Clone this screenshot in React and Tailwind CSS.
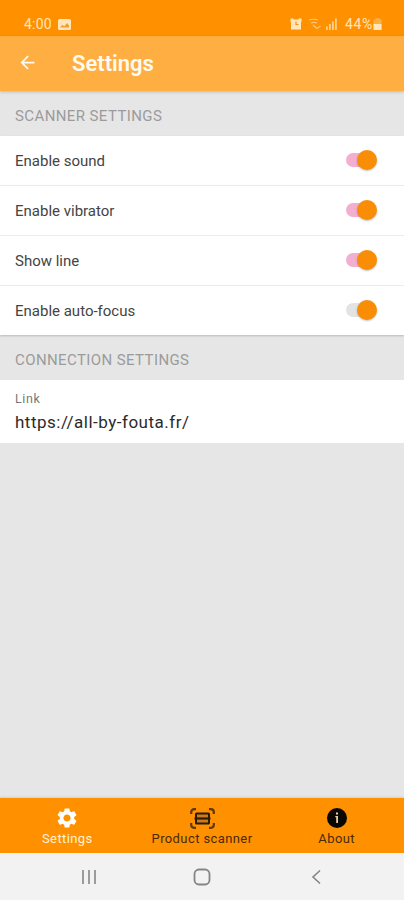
import React, { useState } from 'react';
import { MdArrowBack, MdSettings } from 'react-icons/md';

const initialOptions = [
    { id: 'sound', label: 'Enable sound', checked: true },
    { id: 'vibrator', label: 'Enable vibrator', checked: true },
    { id: 'line', label: 'Show line', checked: true },
    { id: 'focus', label: 'Enable auto-focus', checked: false },
];

const StatusBar = () => (
    <div className="h-9 shrink-0 bg-[#ff9100] flex items-center justify-between pl-6 pr-[22px] pt-3 text-[#ffe6bd]">
        <div className="flex items-center gap-[6px]">
            <span className="text-[14px] leading-none tracking-[0.2px]">4:00</span>
            <svg width="13" height="11" viewBox="0 0 13 11">
                <rect width="13" height="11" rx="1.5" fill="currentColor" />
                <path d="M2 8.5 4.5 5.8 6.2 7.2 9.2 4 11 6.5v2z" fill="#ff9c1f" />
            </svg>
        </div>
        <div className="flex items-center">
            {/* Alarm */}
            <svg width="12" height="12" viewBox="0 0 12 12">
                <path d="M.5.5h3v1h5v-1h3v3l-.5 1v7H1v-7l-.5-1z" fill="currentColor" />
                <path d="M6 3.500v3h2.500" stroke="#ff9100" strokeWidth="1.2" fill="none" />
            </svg>
            {/* Wifi */}
            <svg className="ml-[6px]" width="14" height="12" viewBox="0 0 14 12" fill="none" stroke="currentColor" strokeWidth="1.2" opacity="0.65">
                <path d="M1 2c3-1 6-1 9 0M3 5c2-.7 4-.7 6 0" />
                <path d="M5 7 9 10.500 12.500 8" />
            </svg>
            {/* Signal */}
            <svg className="ml-[4px]" width="11" height="12" viewBox="0 0 11 12" fill="currentColor" opacity="0.75">
                <rect x="0" y="8.5" width="1.8" height="3.5" />
                <rect x="3" y="6" width="1.8" height="6" />
                <rect x="6" y="3.3" width="1.8" height="8.7" />
                <rect x="9" y="0.5" width="1.8" height="11.5" />
            </svg>
            <span className="ml-[8px] text-[14px] leading-none tracking-[0.7px]">44%</span>
            {/* Battery */}
            <svg width="9" height="12" viewBox="0 0 9 12">
                <path d="M2.5 0h4v1.5h2V12h-8V1.5h2z" fill="currentColor" opacity="0.35" />
                <path d="M.5 6h8v6h-8z" fill="currentColor" />
            </svg>
        </div>
    </div>
);

const Toggle = ({ checked, onChange, label }) => (
    <button
        type="button"
        role="switch"
        aria-checked={checked}
        aria-label={label}
        onClick={onChange}
        className="relative -top-px w-[31px] h-5 flex items-center"
    >
        <span className={`w-7 h-[14px] rounded-full ${checked ? 'bg-[#f4afd0]' : 'bg-[#e3e3e3]'}`} />
        <span className="absolute right-0 top-0 size-5 rounded-full bg-[#f98e06] shadow-[0_1px_2px_rgba(0,0,0,0.25)]" />
    </button>
);

const SectionTitle = ({ children }) => (
    <h2 className="shrink-0 h-[45px] pl-[15px] pt-[6px] flex items-center text-[15px] tracking-[0.4px] text-[#9b9b9b]">
        {children}
    </h2>
);

const ScannerIcon = () => (
    <svg width="25" height="21" viewBox="0 0 25 21" fill="none" stroke="#2e1b05">
        <path
            d="M1.200 6V4.200a3 3 0 0 1 3-3H6M19 1.200h1.800a3 3 0 0 1 3 3V6M23.800 15v1.800a3 3 0 0 1-3 3H19M6 19.800H4.200a3 3 0 0 1-3-3V15"
            stroke="#5e3704"
            strokeWidth="2.200"
        />
        <rect x="6" y="5.500" width="13" height="10" rx="0.5" fill="#c87c1c" strokeWidth="2" />
        <path d="M4.500 10.500h16" strokeWidth="2.200" />
    </svg>
);

const InfoIcon = () => (
    <svg width="20" height="20" viewBox="0 0 20 20">
        <circle cx="10" cy="10" r="10" fill="#0a0602" />
        <path d="M9 4.500h2v2H9zM8.300 8h2.700v7H9.200V9.200h-.9z" fill="#e6cdb0" />
    </svg>
);

const App = () => {
    const [options, setOptions] = useState(initialOptions);

    const handleToggle = (id) => {
        setOptions((prev) => prev.map((o) => (o.id === id ? { ...o, checked: !o.checked } : o)));
    };

    return (
        <div className="w-[404px] h-[900px] flex flex-col overflow-hidden bg-[#e6e6e6] font-['Roboto',sans-serif]">
            <StatusBar />

            <header className="relative h-[55px] shrink-0 bg-[#ffae42] flex items-center pl-[17px] text-[#fffaf0] shadow-[0_1px_3px_rgba(0,0,0,0.2)]">
                <MdArrowBack size={21} className="relative -top-px" />
                <h1 className="ml-[34px] text-[22px] leading-none font-semibold">Settings</h1>
            </header>

            <SectionTitle>SCANNER SETTINGS</SectionTitle>

            <div className="relative shrink-0 h-[199px] bg-white flex flex-col shadow-[0_1px_2px_rgba(0,0,0,0.2)]">
                {options.map((option) => (
                    <div
                        key={option.id}
                        className="flex-1 flex items-center justify-between pl-[15px] pr-[27px] pt-px border-b border-[#ececec] last:border-b-0"
                    >
                        <span className="text-[15px] text-[#444]">{option.label}</span>
                        <Toggle
                            label={option.label}
                            checked={option.checked}
                            onChange={() => handleToggle(option.id)}
                        />
                    </div>
                ))}
            </div>

            <SectionTitle>CONNECTION SETTINGS</SectionTitle>

            <div className="shrink-0 h-[63px] bg-white pl-[15px] pt-[11px]">
                <div className="text-[12.5px] leading-4 text-[#777] tracking-[0.6px]">Link</div>
                <div className="mt-[3px] text-[17px] leading-6 text-[#2b2b2b] tracking-[0.5px]">https://all-by-fouta.fr/</div>
            </div>

            {/* Tabs */}
            <nav className="mt-auto shrink-0 h-[55px] bg-[#ff9100] grid grid-cols-3 text-[13px] leading-4 tracking-[0.4px] text-[#4a2a05] shadow-[0_-1px_2px_rgba(0,0,0,0.1)]">
                <a href="#settings" className="flex flex-col items-center pt-2 text-[#fff3dc]">
                    <MdSettings size={24} className="text-white" />
                    <span className="mt-px">Settings</span>
                </a>
                <a href="#scanner" className="flex flex-col items-center pt-2">
                    <span className="h-6 flex items-center pl-px">
                        <ScannerIcon />
                    </span>
                    <span className="mt-px">Product scanner</span>
                </a>
                <a href="#about" className="flex flex-col items-center pt-2">
                    <span className="h-6 flex items-center">
                        <InfoIcon />
                    </span>
                    <span className="mt-px">About</span>
                </a>
            </nav>

            {/* Android buttons */}
            <div className="shrink-0 h-[47px] bg-[#f2f2f2] flex items-center justify-between pl-[81px] pr-[82px] pt-px text-[#858585]">
                <svg width="16" height="16" viewBox="0 0 16 16" stroke="currentColor" strokeWidth="1.600">
                    <path d="M2 1v14M8 1v14M14 1v14" />
                </svg>
                <svg className="-ml-[3px]" width="18" height="18" viewBox="0 0 18 18" fill="none" stroke="currentColor" strokeWidth="1.800">
                    <rect x="1.500" y="1.500" width="15" height="15" rx="4.500" />
                </svg>
                <svg width="12" height="16" viewBox="0 0 12 16" fill="none" stroke="currentColor" strokeWidth="1.600">
                    <path d="M10 1.500 3 8l7 6.500" />
                </svg>
            </div>
        </div>
    );
};

export default App;
